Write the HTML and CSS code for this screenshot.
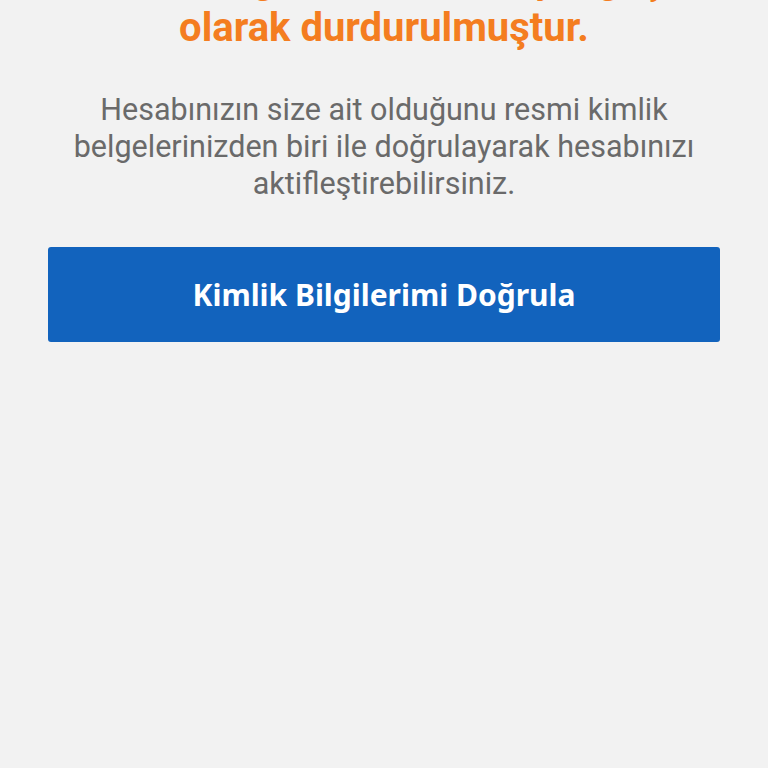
FILE: index.html
```html
<!DOCTYPE html>
<html lang="tr">
<head>
<meta charset="utf-8">
<link rel="stylesheet" href="styles.css">
</head>
<body>
<main class="page">
  <h1 class="title">Hesabınız güvenlik nedeniyle geçici<br>olarak durdurulmuştur.</h1>
  <p class="desc">Hesabınızın size ait olduğunu resmi kimlik belgelerinizden biri ile doğrulayarak hesabınızı aktifleştirebilirsiniz.</p>
  <button class="cta" type="button">Kimlik Bilgilerimi Doğrula</button>
</main>
</body>
</html>
```

FILE: styles.css
```css
html, body {
  margin: 0;
  padding: 0;
  background: #f2f2f2;
  height: 100%;
  overflow: hidden;
}
.page {
  padding: 0 48px;
  display: flex;
  flex-direction: column;
  align-items: stretch;
}
.title {
  margin: -44px -40px 0 -40px;
  font-family: Roboto, "Liberation Sans", sans-serif;
  font-weight: 700;
  font-size: 40px;
  line-height: 48px;
  color: #f47d20;
  text-align: center;
  white-space: nowrap;
}
.desc {
  margin: 39px 0 0 0;
  font-family: Roboto, "Liberation Sans", sans-serif;
  font-weight: 400;
  font-size: 30.5px;
  line-height: 37px;
  color: #6a6a6a;
  text-align: center;
}
.cta {
  margin-top: 45px;
  height: 95px;
  border: none;
  border-radius: 3px;
  background: #1263bd;
  color: #ffffff;
  font-family: "Noto Sans", "Open Sans", sans-serif;
  font-weight: 700;
  font-size: 30px;
  padding: 0;
  cursor: pointer;
}
```
